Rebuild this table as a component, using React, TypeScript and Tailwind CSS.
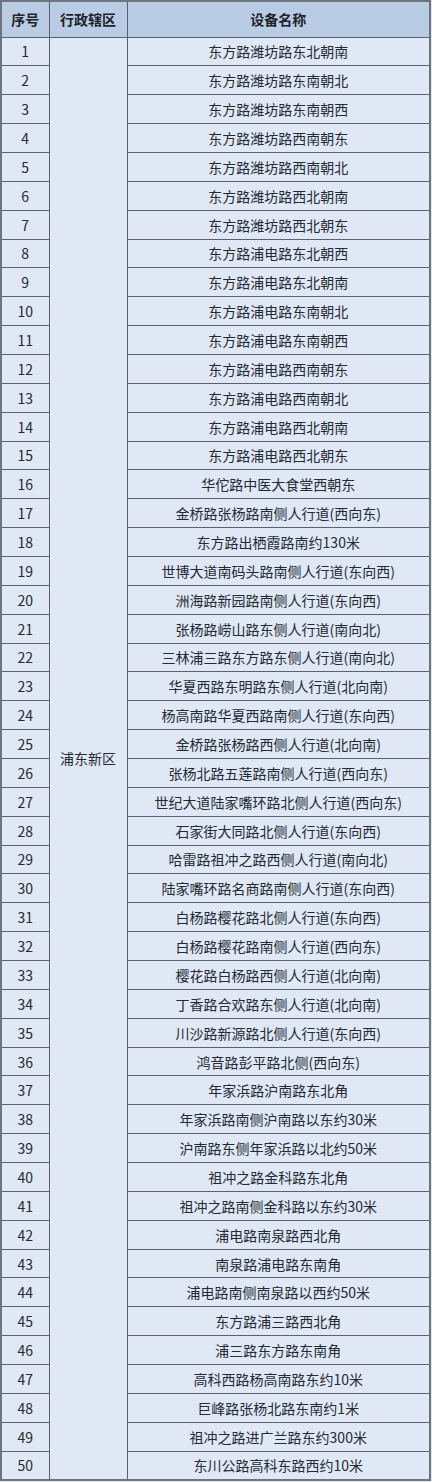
const names: string[] = [
  "东方路潍坊路东北朝南",
  "东方路潍坊路东南朝北",
  "东方路潍坊路东南朝西",
  "东方路潍坊路西南朝东",
  "东方路潍坊路西南朝北",
  "东方路潍坊路西北朝南",
  "东方路潍坊路西北朝东",
  "东方路浦电路东北朝西",
  "东方路浦电路东北朝南",
  "东方路浦电路东南朝北",
  "东方路浦电路东南朝西",
  "东方路浦电路西南朝东",
  "东方路浦电路西南朝北",
  "东方路浦电路西北朝南",
  "东方路浦电路西北朝东",
  "华佗路中医大食堂西朝东",
  "金桥路张杨路南侧人行道(西向东)",
  "东方路出栖霞路南约130米",
  "世博大道南码头路南侧人行道(东向西)",
  "洲海路新园路南侧人行道(东向西)",
  "张杨路崂山路东侧人行道(南向北)",
  "三林浦三路东方路东侧人行道(南向北)",
  "华夏西路东明路东侧人行道(北向南)",
  "杨高南路华夏西路南侧人行道(东向西)",
  "金桥路张杨路西侧人行道(北向南)",
  "张杨北路五莲路南侧人行道(西向东)",
  "世纪大道陆家嘴环路北侧人行道(西向东)",
  "石家街大同路北侧人行道(东向西)",
  "哈雷路祖冲之路西侧人行道(南向北)",
  "陆家嘴环路名商路南侧人行道(东向西)",
  "白杨路樱花路北侧人行道(东向西)",
  "白杨路樱花路南侧人行道(西向东)",
  "樱花路白杨路西侧人行道(北向南)",
  "丁香路合欢路东侧人行道(北向南)",
  "川沙路新源路北侧人行道(东向西)",
  "鸿音路彭平路北侧(西向东)",
  "年家浜路沪南路东北角",
  "年家浜路南侧沪南路以东约30米",
  "沪南路东侧年家浜路以北约50米",
  "祖冲之路金科路东北角",
  "祖冲之路南侧金科路以东约30米",
  "浦电路南泉路西北角",
  "南泉路浦电路东南角",
  "浦电路南侧南泉路以西约50米",
  "东方路浦三路西北角",
  "浦三路东方路东南角",
  "高科西路杨高南路东约10米",
  "巨峰路张杨北路东南约1米",
  "祖冲之路进广兰路东约300米",
  "东川公路高科东路西约10米",
];

export default function App() {
  return (
    <div
      lang="zh-CN"
      className="w-[432px] h-[1482px] bg-[#e3e9f1] font-['Noto_Sans_CJK_SC','Noto_Sans',sans-serif] text-[#222a33]"
    >
      <table className="w-[431px] table-fixed border-collapse border-2 border-[#6c7480] text-[14px] leading-none">
        <colgroup>
          <col className="w-[48px]" />
          <col className="w-[78px]" />
          <col />
        </colgroup>
        <thead>
          <tr className="h-[36px] bg-[#b9cce4]">
            <th className="border border-[#55626f] font-bold text-[14px] text-[#1d242c]">序号</th>
            <th className="border border-[#55626f] font-bold text-[14px] text-[#1d242c]">行政辖区</th>
            <th className="border border-[#55626f] font-bold text-[14px] text-[#1d242c]">设备名称</th>
          </tr>
        </thead>
        <tbody className="bg-[#dfe8f4]">
          {names.map((name, i) => (
            <tr key={i} className="h-[28.86px]">
              <td className="border border-[#55626f] text-center p-0">{i + 1}</td>
              {i === 0 && (
                <td
                  rowSpan={names.length}
                  className="border border-[#55626f] text-center align-middle p-0"
                >
                  浦东新区
                </td>
              )}
              <td className="border border-[#55626f] text-center p-0 whitespace-nowrap">
                {name}
              </td>
            </tr>
          ))}
        </tbody>
      </table>
    </div>
  );
}
